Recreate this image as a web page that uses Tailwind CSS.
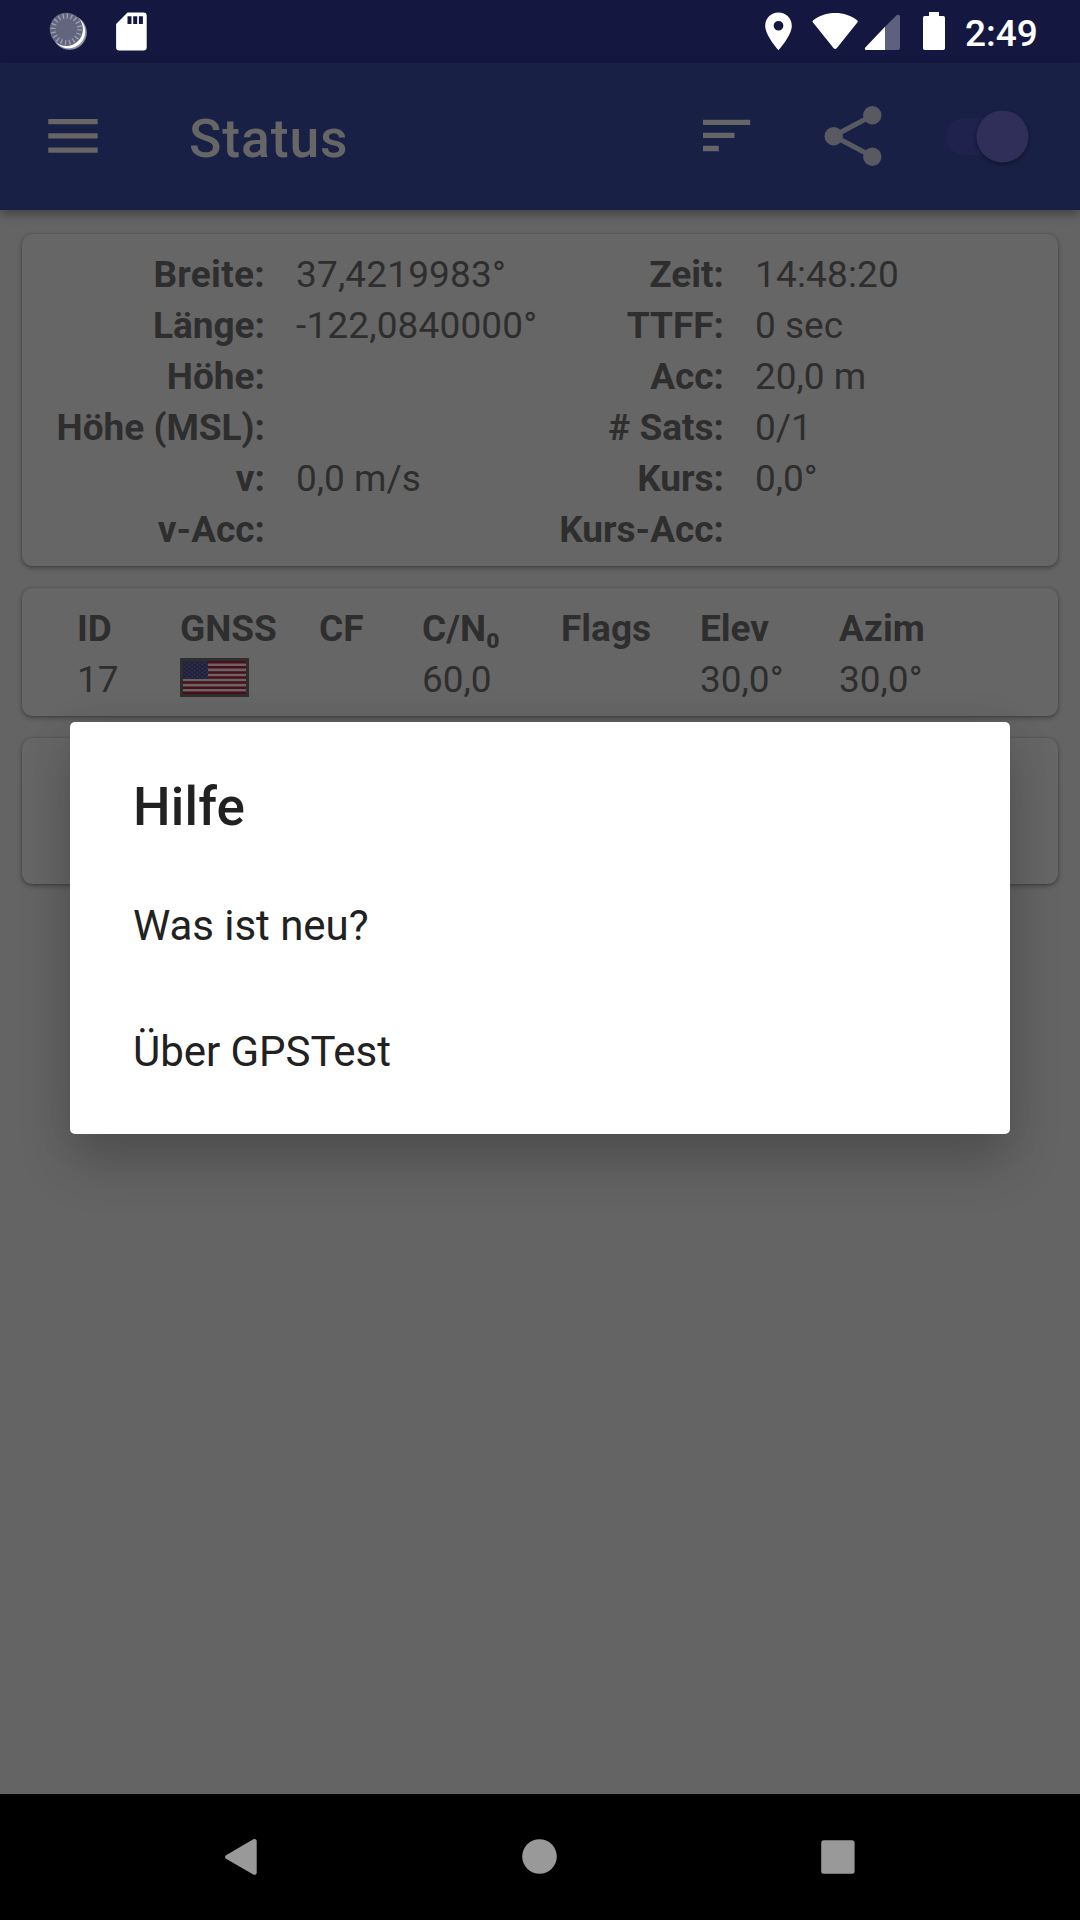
<!DOCTYPE html>
<html lang="de">
<head>
<meta charset="utf-8">
<title>GPSTest – Status</title>
<script src="https://cdn.jsdelivr.net/npm/@tailwindcss/browser@4"></script>
</head>
<body class="bg-[#646464]">
<div class="relative w-[1080px] h-[1920px] flex flex-col overflow-hidden bg-[#646464] font-['Roboto',sans-serif] text-[37px] leading-[51px] text-[#2e2e2e]">

  <!-- System status bar -->
  <header class="h-[63px] shrink-0 bg-[#141840] relative z-10 flex items-start justify-between text-white">
    <div class="flex">
      <svg class="w-[160px] h-[63px]" viewBox="0 0 160 63" fill="none">
        <circle cx="69.5" cy="32.5" r="17.3" fill="#8f92a5"/>
        <circle cx="68.6" cy="31.6" r="16.6" fill="#fff"/>
        <circle cx="66.3" cy="29.3" r="16.6" fill="#63657f"/>
        <circle cx="66.3" cy="29.3" r="13.2" stroke="#9d9fb1" stroke-width="5" stroke-dasharray="1.3 2.847"/>
        <path fill="#fff" fill-rule="evenodd" d="M127.500 12.500H143.500a3.200 3.200 0 0 1 3.200 3.200V47.300a3.200 3.200 0 0 1-3.200 3.200H119.300a3.200 3.200 0 0 1-3.200-3.200V24zM127.500 16.200V24h4V16.200zM133.200 16.200V24h4V16.200zM138.900 16.200V24h4V16.200z"/>
      </svg>
    </div>
    <div class="flex">
      <svg class="w-[204px] h-[63px]" viewBox="760 0 204 63" fill="#fff">
        <path fill-rule="evenodd" d="M778.500 12.600c-7.400 0-13.300 5.900-13.300 13.200 0 9.900 13.300 24.400 13.300 24.400s13.300-14.500 13.300-24.400c0-7.300-5.900-13.200-13.300-13.200zm0 8.300a4.800 4.800 0 1 1 0 9.700 4.800 4.800 0 0 1 0-9.700z"/>
        <path d="M813 20.500C819 15.600 826.700 13 835.200 13s16.200 2.600 22.200 7.500c.5.500.5 1.200.1 1.700L836.700 48.300c-.9 1-2.100 1-3 0L812.800 22.200c-.4-.5-.3-1.200.2-1.700z"/>
        <path fill="#5e6080" d="M885 26.800L896.300 15.500c1.400-1.400 3.700-.5 3.700 1.200V47.800a2.200 2.200 0 0 1-2.200 2.200H885z"/>
        <path d="M885 26.800V50H866c-1.200 0-1.600-1.500-.7-2.400z"/>
        <path d="M929 12h10v4h4.200a1.800 1.800 0 0 1 1.800 1.800V48.200a1.800 1.800 0 0 1-1.800 1.800H924.800a1.800 1.800 0 0 1-1.800-1.800V17.800a1.800 1.800 0 0 1 1.800-1.800H929z"/>
      </svg>
      <span class="w-[116px] pt-2 pl-px font-medium">2:49</span>
    </div>
  </header>

  <!-- App bar -->
  <div class="h-[147px] shrink-0 bg-[#192046] relative z-10 flex items-center justify-between shadow-[0_4px_10px_rgba(0,0,0,0.34)]">
    <div class="flex items-center h-full">
      <svg class="w-[189px] h-[147px]" viewBox="0 63 189 147" fill="#666"><path d="M48.300 119h49.400v5.200H48.300zM48.300 133.200h49.400v5.200H48.300zM48.300 147.400h49.400v5.400H48.300z"/></svg>
      <h1 class="text-[53.5px] leading-[62px] font-medium tracking-[0.9px] text-[#666] pt-1">Status</h1>
    </div>
    <svg class="w-[400px] h-[147px]" viewBox="680 63 400 147" fill="none">
      <path fill="#666" d="M703 119.800h47.200v5.200H703zM703 132.800h31.500v5.200H703zM703 145.800h15.800v5.400H703z"/>
      <g fill="#585961" stroke="#585961">
        <path d="M872.300 115.500L833.700 136l38.600 20.500" fill="none" stroke-width="5"/>
        <circle cx="872.300" cy="115.300" r="9.200" stroke="none"/><circle cx="833.700" cy="136.200" r="9.200" stroke="none"/><circle cx="872.300" cy="156.800" r="9.200" stroke="none"/>
      </g>
      <rect x="946" y="117.700" width="74" height="37.300" rx="18.600" fill="#1e224c"/>
      <circle cx="1002.500" cy="136.600" r="26" fill="#302f5a" class="drop-shadow-[0_2px_2px_rgba(0,0,0,0.4)]"/>
    </svg>
  </div>

  <main class="flex-1 flex flex-col gap-[22px] pt-6 pl-[22px] pr-[22px]">
    <!-- Position card -->
    <section class="h-[332px] shrink-0 rounded-[10px] bg-[#666] pt-[15px] grid grid-cols-[243px_31px_229px_199px_31px_1fr] grid-rows-[repeat(6,51px)] whitespace-nowrap shadow-[0_2px_5px_rgba(0,0,0,0.33),0_0_2px_rgba(0,0,0,0.2)]">
      <b class="text-right tracking-[0.3px]">Breite:</b><i></i><span class="tracking-[0.15px]">37,4219983°</span><b class="text-right">Zeit:</b><i></i><span class="tracking-[0.15px]">14:48:20</span>
      <b class="text-right">Länge:</b><i></i><span class="tracking-[0.15px]">-122,0840000°</span><b class="text-right">TTFF:</b><i></i><span>0 sec</span>
      <b class="text-right">Höhe:</b><i></i><span></span><b class="text-right">Acc:</b><i></i><span>20,0 m</span>
      <b class="text-right">Höhe (MSL):</b><i></i><span></span><b class="text-right"># Sats:</b><i></i><span>0/1</span>
      <b class="text-right">v:</b><i></i><span>0,0 m/s</span><b class="text-right">Kurs:</b><i></i><span>0,0°</span>
      <b class="text-right">v-Acc:</b><i></i><span></span><b class="text-right">Kurs-Acc:</b><i></i><span></span>
    </section>

    <!-- Satellite card -->
    <section class="h-[128px] shrink-0 rounded-[10px] bg-[#666] pt-[15px] pl-[55px] grid grid-cols-[103px_139px_103px_139px_139px_139px_1fr] grid-rows-[51px_51px] whitespace-nowrap shadow-[0_2px_5px_rgba(0,0,0,0.33),0_0_2px_rgba(0,0,0,0.2)]">
      <b>ID</b><b>GNSS</b><b>CF</b><b>C/N₀</b><b>Flags</b><b>Elev</b><b>Azim</b>
      <span>17</span>
      <svg class="mt-1 w-[69px] h-[39px]" viewBox="0 0 69 39">
        <defs>
          <pattern id="stars" width="5" height="4" patternUnits="userSpaceOnUse" x="3.500" y="3.500">
            <path fill="#4a4a60" d="M.5.500h1.300v1.300H.5zM3 2.500h1.300v1.300H3z"/>
          </pattern>
        </defs>
        <path fill="#2e2e2e" d="M0 0h69v39H0z"/>
        <path fill="#666" d="M3 3h63v33H3z"/>
        <path stroke="#4c0c18" stroke-width="2.540" d="M3 4.270h63M3 9.350h63M3 14.430h63M3 19.500h63M3 24.580h63M3 29.660h63M3 34.730h63"/>
        <path fill="#1e1e3a" d="M3 3h25v17.700H3z"/>
        <path fill="url(#stars)" d="M3 3h25v17.700H3z"/>
      </svg>
      <span></span><span>60,0</span><span></span><span>30,0°</span><span>30,0°</span>
    </section>

    <section class="h-[146px] shrink-0 rounded-[10px] bg-[#666] shadow-[0_2px_5px_rgba(0,0,0,0.33),0_0_2px_rgba(0,0,0,0.2)]"></section>
  </main>

  <!-- System navigation -->
  <nav class="h-[126px] shrink-0 bg-black">
    <svg class="w-[1080px] h-[126px]" viewBox="0 1794 1080 126" fill="#999">
      <path d="M226 1855.300L253.300 1839.300c1.600-.9 3.400.1 3.400 1.800V1872.700c0 1.700-1.800 2.700-3.400 1.800L226 1858.700c-1.300-.8-1.300-2.600 0-3.400z"/>
      <circle cx="539.500" cy="1856.500" r="17.300"/>
      <rect x="821.200" y="1840.300" width="33.400" height="33.400" rx="2.500"/>
    </svg>
  </nav>

  <!-- Help dialog -->
  <div role="dialog" class="absolute z-20 left-[70px] top-[722px] w-[940px] h-[412px] rounded-[5px] bg-white text-[#212121] px-[63px] pt-[55px] shadow-[0_30px_52px_rgba(0,0,0,0.19),0_4px_44px_rgba(0,0,0,0.08)]">
    <h2 class="text-[53px] leading-[61px] font-medium tracking-[0.2px] pb-[25px]">Hilfe</h2>
    <ul class="text-[42px] leading-[126px] tracking-[-0.05px]">
      <li>Was ist neu?</li>
      <li>Über GPSTest</li>
    </ul>
  </div>
</div>
</body>
</html>
